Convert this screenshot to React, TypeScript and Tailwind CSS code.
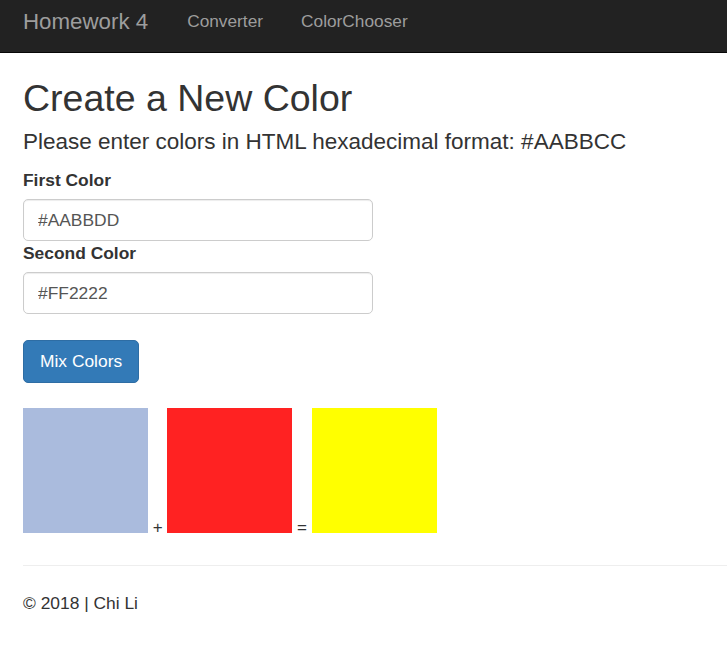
const swatches = ['#AABBDD', '#FF2222', '#FFFF00'];

const App = () => {
  return (
    <div className="min-h-screen bg-white text-[#333] font-['Liberation_Sans',Arial,sans-serif] text-[17.4px]">
      {/* Navbar */}
      <nav className="h-[53px] bg-[#222] border-b border-[#080808] flex items-center px-[23px]">
        <span className="text-[22.3px] text-[#9d9d9d] mr-[20px] -mt-[8px]">Homework 4</span>
        <a className="px-[19px] text-[17.3px] text-[#9d9d9d] -mt-[8px]">Converter</a>
        <a className="px-[19px] text-[17.3px] text-[#9d9d9d] -mt-[8px]">ColorChooser</a>
      </nav>

      <main className="px-[23px]">
        <h1 className="mt-[25px] text-[37.5px] leading-[40px]">Create a New Color</h1>
        <h4 className="mt-[12px] text-[22.5px] leading-[24px]">
          Please enter colors in HTML hexadecimal format: #AABBCC
        </h4>

        <form className="mt-[14px]">
          <label className="block font-bold leading-[24px] mb-[7px]">First Color</label>
          <input
            defaultValue="#AABBDD"
            className="block w-[350px] h-[42px] px-[14px] border border-[#ccc] rounded-[5px] text-[#555] shadow-[inset_0_1px_1px_rgba(0,0,0,0.075)]"
          />
          <label className="block font-bold leading-[24px] mb-[7px]">Second Color</label>
          <input
            defaultValue="#FF2222"
            className="block w-[350px] h-[42px] px-[14px] border border-[#ccc] rounded-[5px] text-[#555] shadow-[inset_0_1px_1px_rgba(0,0,0,0.075)]"
          />
          <button
            type="button"
            className="mt-[26px] h-[43px] px-[16px] bg-[#337ab7] border border-[#2e6da4] rounded-[5px] text-white"
          >
            Mix Colors
          </button>
        </form>

        {/* Swatches */}
        <div className="mt-[25px] flex items-baseline leading-none text-[17px]">
          <div className="w-[125px] h-[125px]" style={{ background: swatches[0] }} />
          <span className="whitespace-pre"> + </span>
          <div className="w-[125px] h-[125px]" style={{ background: swatches[1] }} />
          <span className="whitespace-pre"> = </span>
          <div className="w-[125px] h-[125px]" style={{ background: swatches[2] }} />
        </div>

        <hr className="mt-[29px] border-t border-[#eee] -mr-[23px]" />
        <footer className="pt-[25px] leading-[24px]">© 2018 | Chi Li</footer>
      </main>
    </div>
  );
};

export default App;
